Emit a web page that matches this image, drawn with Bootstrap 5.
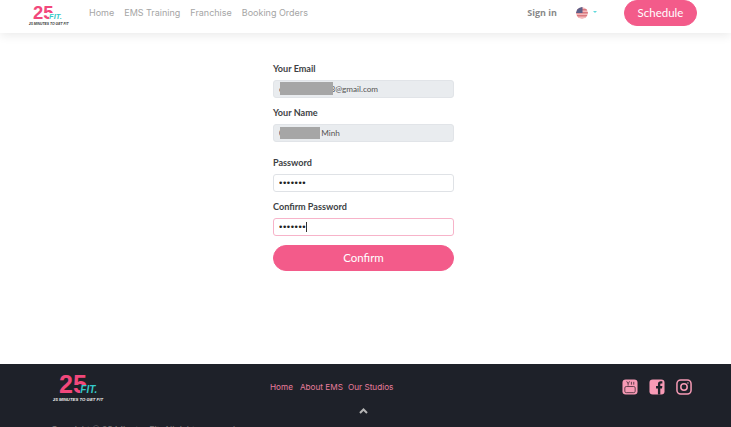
<!DOCTYPE html>
<html lang="en"><head><meta charset="utf-8">
<title>Confirm</title>
<link href="https://cdn.jsdelivr.net/npm/bootstrap@5.3.0/dist/css/bootstrap.min.css" rel="stylesheet">
<style>
html,body{height:427px;overflow:hidden;background:#fff}
body{font-family:"Lato","Open Sans",sans-serif;color:#3a3f45;display:flex;flex-direction:column}
.top-bar{height:33px;padding:0 34px 7px 29px;box-shadow:0 2px 10px rgba(0,0,0,.09);background:#fff;position:relative;z-index:1}
.brand-mark{display:flex;flex-direction:column;line-height:1;font-family:"Liberation Sans",sans-serif}
.brand-num{display:flex;align-items:flex-end;font-weight:700;color:#f2487b}
.brand-fit{color:#35c9c9;font-weight:700;font-style:italic}
.brand-tag{font-weight:700;font-style:italic;white-space:nowrap;text-align:center}
.brand-head{width:37px;margin-top:3px}
.brand-head .brand-num{font-size:18.5px;height:18px;line-height:18px;padding-left:4px}
.brand-head .brand-fit{font-size:7.5px;line-height:7px;margin-left:-5px;margin-bottom:2px;background:#fff;padding-left:.5px}
.brand-head .brand-tag{font-size:3.4px;color:#333;line-height:4px}
.brand-foot{width:49px}
.brand-foot .brand-num{font-size:25px;height:23px;line-height:23px;padding-left:6px}
.brand-foot .brand-fit{font-size:10px;line-height:9px;margin-left:-7px;margin-bottom:2px;background:#1e2129;padding-left:.5px}
.brand-foot .brand-tag{font-size:4.3px;line-height:6px;color:#eee;margin-top:1px}
.nav-row{gap:10px;margin-left:23px;font-family:"Inter",sans-serif;font-size:9px}
.nav-row a{color:#a5a5a5;text-decoration:none;white-space:nowrap}
.sign-link{font-weight:700;font-size:9px;color:#888;text-decoration:none;margin-right:19px;font-family:"Open Sans",sans-serif}
.flag-ball{width:12px;height:12px;border-radius:50%;display:block}
.lang-caret{width:0;height:0;border-left:2.5px solid transparent;border-right:2.5px solid transparent;border-top:2.5px solid #5fd9dc;margin-left:5px;margin-right:27px;margin-bottom:3px}
.sched-btn{--bs-btn-bg:#f35b8a;--bs-btn-border-color:#f35b8a;--bs-btn-color:#fff;--bs-btn-hover-bg:#f35b8a;--bs-btn-hover-color:#fff;width:73px;height:26px;padding:0;font-size:11.5px;border-radius:13px;line-height:24px}
.main-zone{flex:0 0 331px;padding-top:30px}
.form-box{width:181px;margin-left:273px}
.field-lbl{font-size:9.1px;font-weight:700;color:#3d3f44;line-height:12px;margin:0 0 4.5px;display:block}
.field-input{height:18px;min-height:0;padding:0 5px;font-size:8.2px;border-radius:3px;border-color:#dfe2e6;color:#555;font-family:"Lato",sans-serif;line-height:16px}
.field-input:disabled{background:#e9ecef;border-color:#e1e4e8}
.field-input.dots{font-family:"Liberation Sans",sans-serif;font-size:9.5px;letter-spacing:.55px;color:#222}
.field-input.focused{border-color:#f7b3c9;box-shadow:none}
.redact{position:absolute;background:#a6a6a6}
.rd-a{left:7px;top:2px;width:53px;height:13px}
.rd-b{left:7px;top:3px;width:40px;height:12px}
.type-caret{position:absolute;left:33px;top:4px;width:1px;height:10px;background:#333}
.box-wrap{position:relative}
.gap-a{margin-bottom:9.5px}.gap-b{margin-bottom:15.5px}.gap-c{margin-bottom:9px}
.conf-btn{--bs-btn-bg:#f35b8a;--bs-btn-border-color:#f35b8a;--bs-btn-color:#fff;--bs-btn-hover-bg:#f35b8a;--bs-btn-hover-color:#fff;height:26px;padding:0;font-size:11.5px;border-radius:13px;line-height:24px}
.foot-zone{flex:1;background:#1e2129;padding:9px 39px 0 53px;position:relative;overflow:hidden}
.foot-links{font-family:"Inter",sans-serif;font-size:8.2px;margin:8px 0 0 168px}
.foot-links a{color:#e77d9c;text-decoration:none;white-space:nowrap}
.foot-links a+a{margin-left:7px}
.foot-links a+a+a{margin-left:5px}
.soc-row{gap:11px;margin-top:6px}
.up-chev{position:absolute;left:359px;top:44px;display:block}
.tiny-line{position:absolute;left:51px;top:59px;font-size:9px;color:#777;white-space:nowrap}
</style></head>
<body>
<nav class="top-bar d-flex align-items-center">
  <div class="brand-mark brand-head">
    <div class="brand-num">25<span class="brand-fit">FIT.</span></div>
    <div class="brand-tag">25 MINUTES TO GET FIT</div>
  </div>
  <div class="nav-row d-flex">
    <a href="#">Home</a><a href="#">EMS Training</a><a href="#">Franchise</a><a href="#">Booking Orders</a>
  </div>
  <div class="ms-auto d-flex align-items-center">
    <a class="sign-link" href="#">Sign in</a>
    <svg class="flag-ball" viewBox="0 0 12 12"><defs><clipPath id="fc"><circle cx="6" cy="6" r="6"/></clipPath></defs><g clip-path="url(#fc)"><rect width="12" height="12" fill="#f3b9bb"/><rect y="2" width="12" height="1.5" fill="#d9787f"/><rect y="5" width="12" height="1.5" fill="#d9787f"/><rect y="8" width="12" height="1.5" fill="#d9787f"/><rect width="6.5" height="6" fill="#5d5f88"/></g></svg>
    <span class="lang-caret"></span>
    <button class="btn sched-btn" type="button">Schedule</button>
  </div>
</nav>
<main class="main-zone">
  <form class="form-box">
    <label class="field-lbl">Your Email</label>
    <div class="box-wrap gap-a"><input class="form-control field-input" disabled value="c00000000003@gmail.com"><span class="redact rd-a"></span></div>
    <label class="field-lbl">Your Name</label>
    <div class="box-wrap gap-b"><input class="form-control field-input" disabled value="00000000&nbsp; Minh"><span class="redact rd-b"></span></div>
    <label class="field-lbl">Password</label>
    <div class="gap-a"><input class="form-control field-input dots" type="password" value="1234567"></div>
    <label class="field-lbl">Confirm Password</label>
    <div class="box-wrap gap-c"><input class="form-control field-input dots focused" type="password" value="1234567"><span class="type-caret"></span></div>
    <button class="btn conf-btn w-100" type="button">Confirm</button>
  </form>
</main>
<footer class="foot-zone d-flex align-items-start">
  <div class="brand-mark brand-foot">
    <div class="brand-num">25<span class="brand-fit">FIT.</span></div>
    <div class="brand-tag">25 MINUTES TO GET FIT</div>
  </div>
  <div class="foot-links d-flex">
    <a href="#">Home</a><a href="#">About EMS</a><a href="#">Our Studios</a>
  </div>
  <div class="soc-row d-flex ms-auto">
    <svg width="16" height="16" viewBox="0 0 17 17"><rect x=".5" y=".5" width="16" height="16" rx="3.5" fill="#f79ab5"/><rect x="3" y="8" width="11" height="6.5" rx="1.5" fill="none" stroke="#5a3a48"/><path d="M5 2.5l1.5 2.5 1.5-2.5M6.5 5v2M10 3v3M12.5 3v3" stroke="#5a3a48" fill="none"/></svg>
    <svg width="16" height="16" viewBox="0 0 17 17"><rect x=".5" y=".5" width="16" height="16" rx="3.5" fill="#f79ab5"/><path d="M9.5 16.5V10H7.5V7.5h2V5.5c0-2 1.2-3 3-3h1.7v2.3h-1.2c-.8 0-1 .4-1 1v1.7h2.2l-.4 2.5h-1.8v6.5z" fill="#1e2129"/></svg>
    <svg width="16" height="16" viewBox="0 0 17 17" fill="none" stroke="#f79ab5" stroke-width="1.6"><rect x="1" y="1" width="15" height="15" rx="4"/><circle cx="8.5" cy="8.5" r="3.4"/><circle cx="12.7" cy="4.3" r=".8" fill="#f79ab5" stroke="none"/></svg>
  </div>
  <svg class="up-chev" width="9" height="6" viewBox="0 0 9 6"><path d="M1 5l3.5-3.5L8 5" fill="none" stroke="#b5b5b5" stroke-width="2"/></svg>
  <div class="tiny-line">Copyright © 25 Minutes Fit. All rights reserved</div>
</footer>
</body></html>
